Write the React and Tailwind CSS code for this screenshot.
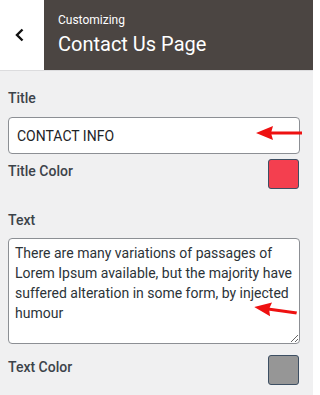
import { useState } from 'react'

// red annotation arrow pointing left
function Arrow({ className, tilt = 0, length = 46 }) {
  return (
    <svg
      className={className}
      width={length}
      height="20"
      viewBox={`0 0 ${length} 20`}
      style={{ transform: `rotate(${tilt}deg)` }}
    >
      <line x1="12" y1="10" x2={length} y2="10" stroke="#ee1111" strokeWidth="3" />
      <polygon points="0,10 17,3 15,10 17,17" fill="#ee1111" />
    </svg>
  )
}

function ColorRow({ label, color }) {
  return (
    <div className="flex items-start justify-between">
      <span className="text-[14px] leading-5 font-medium text-[#3c434a] mt-[2px]">{label}</span>
      <div
        className="w-[31px] h-[30px] rounded-[3px] border border-[#3d4f63] mr-[6px]"
        style={{ backgroundColor: color }}
      />
    </div>
  )
}

export default function App() {
  const [title, setTitle] = useState('CONTACT INFO')
  const [text, setText] = useState(
    'There are many variations of passages of Lorem Ipsum available, but the majority have suffered alteration in some form, by injected humour'
  )

  return (
    <div className="w-[313px] h-[395px] bg-[#f0f0f1] overflow-hidden" style={{ fontFamily: 'Roboto, sans-serif' }}>
      {/* Header */}
      <div className="flex h-[71px] border-b border-[#dcdcde]">
        <button className="w-[44px] bg-white flex items-center justify-center pr-[4px]">
          <svg width="10" height="14" viewBox="0 0 10 14">
            <polyline points="7.5,1.5 2,7 7.5,12.5" fill="none" stroke="#111" strokeWidth="2.4" />
          </svg>
        </button>
        <div className="flex-1 bg-[#4b4542] pl-[14px] flex flex-col justify-center pb-[2px]">
          <span className="text-[12px] leading-4 text-white">Customizing</span>
          <span className="text-[20px] leading-6 text-white mt-[4px]">Contact Us Page</span>
        </div>
      </div>

      {/* Body */}
      <div className="px-2 pt-[17px]">
        <label className="block text-[14px] leading-5 font-medium text-[#3c434a]">Title</label>
        <div className="relative mt-[9px] w-[292px]">
          <input
            value={title}
            onChange={(e) => setTitle(e.target.value)}
            className="w-full h-[37px] bg-white border border-[#8c8f94] rounded-[4px] px-[8px] text-[14px] text-[#1d2327] outline-none"
          />
          <Arrow className="absolute left-[248px] top-[6px]" />
        </div>

        <div className="mt-[5px]">
          <ColorRow label="Title Color" color="#f43f4f" />
        </div>

        <label className="block mt-[21px] text-[14px] leading-5 font-medium text-[#3c434a]">Text</label>
        <div className="relative mt-[8px] w-[292px]">
          <textarea
            value={text}
            onChange={(e) => setText(e.target.value)}
            className="block w-full h-[106px] bg-white border border-[#8c8f94] rounded-[4px] px-[6px] pt-[4px] text-[14px] leading-5 text-[#2c3338] outline-none resize-y"
          />
          <Arrow className="absolute left-[246px] top-[62px]" tilt={8} length={43} />
        </div>

        <div className="mt-[11px]">
          <ColorRow label="Text Color" color="#969696" />
        </div>
      </div>
    </div>
  )
}
